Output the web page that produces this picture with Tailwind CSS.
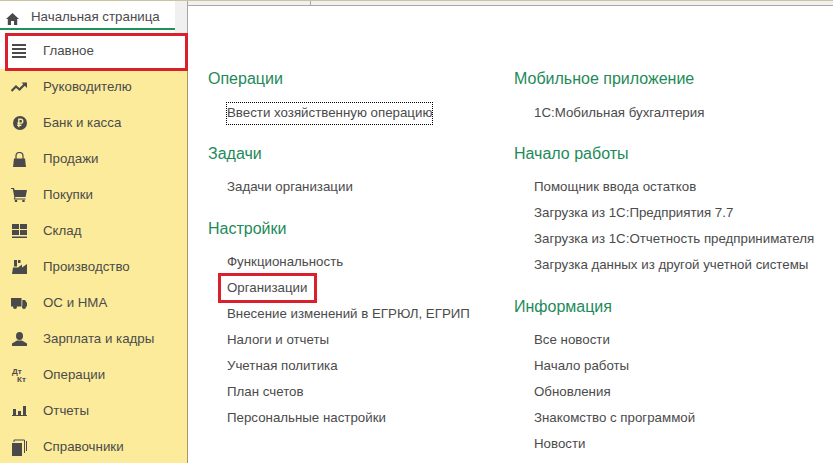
<!DOCTYPE html>
<html>
<head>
<meta charset="utf-8" />
<title>Начальная страница</title>
<script src="https://cdn.jsdelivr.net/npm/@tailwindcss/browser@4"></script>
</head>
<body class="bg-white">
<div class="relative w-[833px] h-[463px] overflow-hidden bg-white text-[13.3px] text-[#4b4b4b] font-['Liberation_Sans',Arial,sans-serif]">
  <!-- top strip -->
  <div class="h-[1px] bg-[#c9c3a0]"></div>
  <div class="flex h-[462px]">
    <!-- left column -->
    <div class="w-[188px] shrink-0 flex flex-col">
      <div class="flex h-[32px] shrink-0">
        <div class="relative w-[175px] h-[32px] flex items-center bg-white">
          <svg class="ml-[6px] mt-[3px]" width="13" height="12" viewBox="0 0 13 12"><path fill="#4a4a4a" d="M6.500 0 13 6h-1.800v6H8V8H5v4H1.800V6H0z"/></svg>
          <span class="ml-[12px]">Начальная страница</span>
          <div class="absolute left-0 right-0 top-[27px] h-[2px] bg-[#1e9356]"></div>
        </div>
        <div class="w-[13px] bg-[#f0f0f0] border-r border-[#a8a8a8]"></div>
      </div>
      <div class="flex-1 bg-[#fbeb9a] border-r border-[#a59b63]">
        <div class="flex items-center h-[36px] bg-white">
          <svg class="ml-[12px]" width="15" height="14" viewBox="0 0 15 14"><path fill="#4a4a4a" d="M0 0h14v2H0zM0 4h14v2H0zM0 8h14v2H0zM0 12h14v2H0z"/></svg>
          <span class="ml-[16px]">Главное</span>
        </div>
        <div class="flex items-center h-[36px]">
          <svg class="ml-[11px]" width="16" height="10" viewBox="0 0 16 10"><path fill="none" stroke="#4a4a4a" stroke-width="2.200" d="M0.500 9 5 4.500 8.500 7.500 14 2"/><path fill="#4a4a4a" d="M10.500 0.500H16V6z"/></svg>
          <span class="ml-[16px]">Руководителю</span>
        </div>
        <div class="flex items-center h-[36px]">
          <svg class="ml-[13px]" width="14" height="14" viewBox="0 0 14 14"><circle cx="7" cy="7" r="7" fill="#4a4a4a"/><path fill="none" stroke="#fbeb9a" stroke-width="1.400" d="M5.800 11.200V3.200h2a1.900 1.900 0 0 1 0 3.900H4.200M4.200 9.200h4.200"/></svg>
          <span class="ml-[16px]">Банк и касса</span>
        </div>
        <div class="flex items-center h-[36px]">
          <svg class="ml-[13px]" width="13" height="15" viewBox="0 0 13 15"><path fill="#4a4a4a" d="M1 6.500H12L13 15H0z"/><path fill="none" stroke="#4a4a4a" stroke-width="1.200" d="M3 8V4a3.500 3.500 0 0 1 7 0V8"/></svg>
          <span class="ml-[17px]">Продажи</span>
        </div>
        <div class="flex items-center h-[36px]">
          <svg class="ml-[11px]" width="16" height="14" viewBox="0 0 16 14"><path fill="#4a4a4a" d="M0 0h3l.6 2H16l-1.400 7H4.400L4 10.500h10.500V11.500H2.800L3.300 9 1.800 1H0z"/><circle cx="5" cy="13" r="1.300" fill="#4a4a4a"/><circle cx="12.500" cy="13" r="1.300" fill="#4a4a4a"/></svg>
          <span class="ml-[16px]">Покупки</span>
        </div>
        <div class="flex items-center h-[36px]">
          <svg class="ml-[12px]" width="15" height="14" viewBox="0 0 15 14"><path fill="#4a4a4a" d="M0 0h7v5H0zM8 0h7v5H8zM0 6h7v5H0zM8 6h7v5H8zM0 12.500h15V14H0z"/></svg>
          <span class="ml-[16px]">Склад</span>
        </div>
        <div class="flex items-center h-[36px]">
          <svg class="ml-[12px]" width="15" height="14" viewBox="0 0 15 14"><path fill="#4a4a4a" d="M2 0h3v6.500H2zM6 0h2.500v3H6zM0 14 1 7.500H6L10 4.500V7.500L15 4V14z"/></svg>
          <span class="ml-[16px]">Производство</span>
        </div>
        <div class="flex items-center h-[36px]">
          <svg class="ml-[11px]" width="16" height="11" viewBox="0 0 16 11"><path fill="#4a4a4a" d="M0 0h10.500v8.500H0zM11.300 2H14L16 5v3.500h-4.700z"/><circle cx="4" cy="9" r="2" fill="#4a4a4a"/><circle cx="13" cy="9" r="2" fill="#4a4a4a"/></svg>
          <span class="ml-[16px]">ОС и НМА</span>
        </div>
        <div class="flex items-center h-[36px]">
          <svg class="ml-[12px]" width="15" height="14" viewBox="0 0 15 14"><ellipse cx="7.500" cy="4" rx="3.500" ry="4" fill="#4a4a4a"/><path fill="#4a4a4a" d="M0 14v-2.500L5 8.500h5l5 3V14z"/></svg>
          <span class="ml-[16px]">Зарплата и кадры</span>
        </div>
        <div class="flex items-center h-[36px]">
          <div class="relative ml-[12px] w-[15px] h-[15px] font-bold text-[8px] leading-[8px] text-[#4a4a4a]">
            <span class="absolute left-0 top-0">Дт</span>
            <span class="absolute left-[5px] top-[8px]">Кт</span>
          </div>
          <span class="ml-[16px]">Операции</span>
        </div>
        <div class="flex items-center h-[36px]">
          <svg class="ml-[12px]" width="15" height="10" viewBox="0 0 15 10"><path fill="#4a4a4a" d="M1 3h3v6H1zM6 5h3v4H6zM11 0h3v9h-3zM0 9h15v1H0z"/></svg>
          <span class="ml-[16px]">Отчеты</span>
        </div>
        <div class="flex items-center h-[36px]">
          <svg class="ml-[12px]" width="15" height="17" viewBox="0 0 15 17"><path fill="#4a4a4a" d="M0 4h10v13H0z"/><path fill="none" stroke="#4a4a4a" d="M2 3V1h10.500v13M14.500 2v10"/></svg>
          <span class="ml-[16px]">Справочники</span>
        </div>
      </div>
    </div>

    <!-- content -->
    <div class="flex-1 relative">
      <div class="mt-[4px] h-[1px] bg-[#a8a8a8]"></div>
      <div class="absolute left-0 top-0 h-[4px] right-0 bg-[#f0f0f0]"></div>
      <div class="absolute left-[122px] top-0 h-[4px] w-[1px] bg-[#a8a8a8]"></div>
      <div class="flex pt-[63px] pl-[20px]">
        <div class="w-[306px] shrink-0">
          <h2 class="h-[20px] leading-[20px] text-[16px] text-[#1e8a5a]">Операции</h2>
          <div class="mt-[11px] pl-[19px] h-[26px] pt-[2px]">
            <a class="block -ml-[1px] h-[23px] leading-[20px] w-fit border border-dotted border-black">Ввести хозяйственную операцию</a>
          </div>
          <h2 class="mt-[18px] h-[20px] leading-[20px] text-[16px] text-[#1e8a5a]">Задачи</h2>
          <div class="mt-[10px] pl-[19px]">
            <a class="block h-[26px] leading-[26px]">Задачи организации</a>
          </div>
          <h2 class="mt-[19px] h-[20px] leading-[20px] text-[16px] text-[#1e8a5a]">Настройки</h2>
          <div class="mt-[10px] pl-[19px]">
            <a class="block h-[26px] leading-[26px]">Функциональность</a>
            <a class="block h-[26px] leading-[26px]">Организации</a>
            <a class="block h-[26px] leading-[26px]">Внесение изменений в ЕГРЮЛ, ЕГРИП</a>
            <a class="block h-[26px] leading-[26px]">Налоги и отчеты</a>
            <a class="block h-[26px] leading-[26px]">Учетная политика</a>
            <a class="block h-[26px] leading-[26px]">План счетов</a>
            <a class="block h-[26px] leading-[26px]">Персональные настройки</a>
          </div>
        </div>
        <div class="flex-1">
          <h2 class="h-[20px] leading-[20px] text-[16px] text-[#1e8a5a]">Мобильное приложение</h2>
          <div class="mt-[11px] pl-[20px]">
            <a class="block h-[26px] leading-[26px]">1С:Мобильная бухгалтерия</a>
          </div>
          <h2 class="mt-[18px] h-[20px] leading-[20px] text-[16px] text-[#1e8a5a]">Начало работы</h2>
          <div class="mt-[10px] pl-[20px]">
            <a class="block h-[26px] leading-[26px]">Помощник ввода остатков</a>
            <a class="block h-[26px] leading-[26px]">Загрузка из 1С:Предприятия 7.7</a>
            <a class="block h-[26px] leading-[26px]">Загрузка из 1С:Отчетность предпринимателя</a>
            <a class="block h-[26px] leading-[26px]">Загрузка данных из другой учетной системы</a>
          </div>
          <h2 class="mt-[19px] h-[20px] leading-[20px] text-[16px] text-[#1e8a5a]">Информация</h2>
          <div class="mt-[10px] pl-[20px]">
            <a class="block h-[26px] leading-[26px]">Все новости</a>
            <a class="block h-[26px] leading-[26px]">Начало работы</a>
            <a class="block h-[26px] leading-[26px]">Обновления</a>
            <a class="block h-[26px] leading-[26px]">Знакомство с программой</a>
            <a class="block h-[26px] leading-[26px]">Новости</a>
          </div>
        </div>
      </div>
    </div>
  </div>
  <!-- red annotation boxes -->
  <div class="absolute left-[5px] top-[33px] w-[183px] h-[38px] border-[3px] border-[#d9202c]"></div>
  <div class="absolute left-[218px] top-[273px] w-[99px] h-[30px] border-[3px] border-[#d9202c]"></div>
</div>
</body>
</html>
